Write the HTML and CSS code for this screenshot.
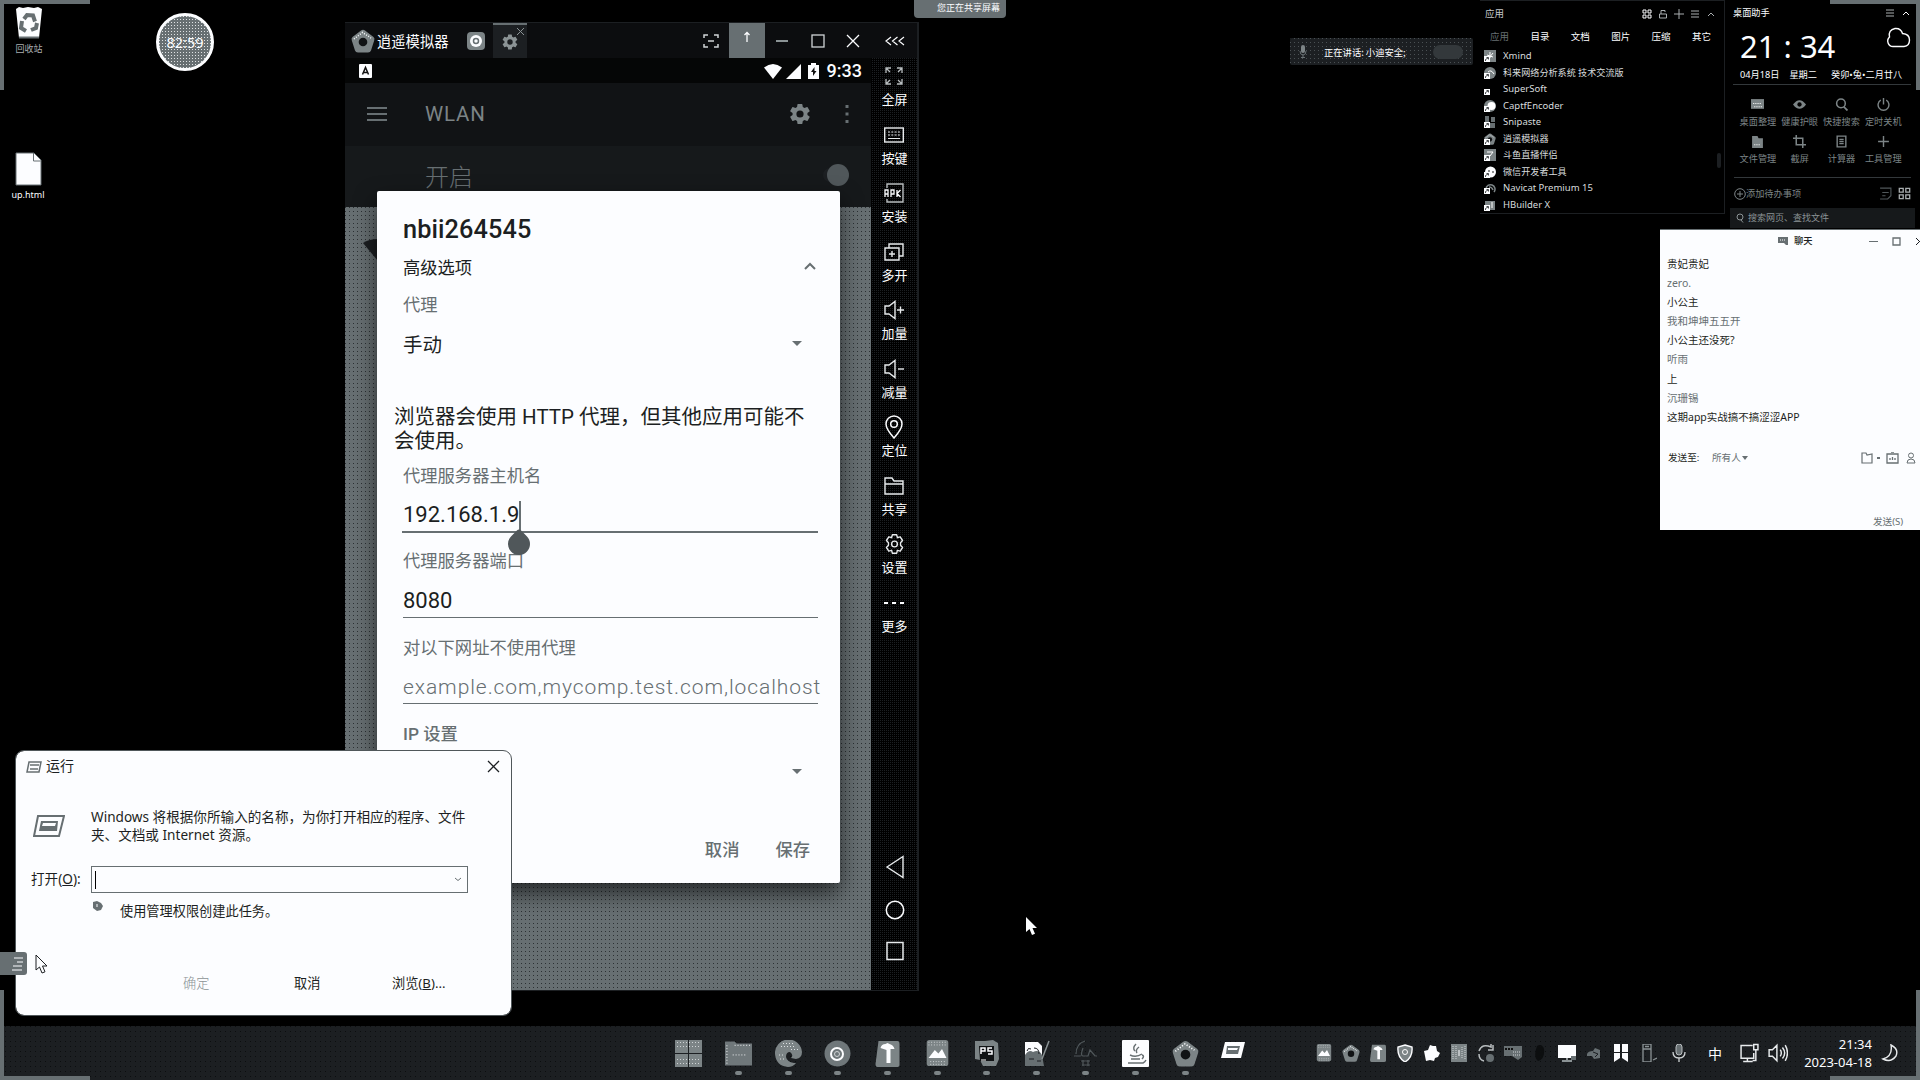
FILE: index.html
```html
<!DOCTYPE html>
<html lang="zh-CN">
<head>
<meta charset="utf-8">
<title>桌面</title>
<link rel="stylesheet" href="styles.css">
</head>
<body>
<svg class="defs" aria-hidden="true">
  <defs>
    <symbol id="penta" viewBox="0 0 24 24"><path d="M10 1.5Q12 .2 14 1.5L22.5 8Q24 9.400 23.200 11.500L20 21.500Q19.400 23.500 17 23.500H7Q4.600 23.500 4 21.500L.8 11.500Q0 9.400 1.500 8Z" fill="#7c8486"/><path d="M3 10L11.500 3.500 20 9" stroke="#fcfdff" stroke-width="1.500" stroke-dasharray="1 1.500" fill="none"/><circle cx="12" cy="13" r="4.300" fill="#111315"/></symbol>
    <symbol id="gear" viewBox="0 0 24 24"><path fill-rule="evenodd" d="M19.4 13c.04-.3.1-.6.1-1s-.03-.7-.1-1l2.1-1.600a.5.5 0 0 0 .1-.6l-2-3.500a.5.5 0 0 0-.6-.2l-2.500 1a7 7 0 0 0-1.700-1L14.400 2.400a.5.5 0 0 0-.5-.4h-4a.5.5 0 0 0-.5.4L9.100 5.100a7 7 0 0 0-1.700 1l-2.500-1a.5.5 0 0 0-.6.2l-2 3.500a.5.5 0 0 0 .1.6L4.600 11a8 8 0 0 0 0 2l-2.200 1.600a.5.5 0 0 0-.1.6l2 3.500c.1.2.4.3.6.2l2.500-1a7 7 0 0 0 1.700 1l.3 2.700c0 .2.200.4.500.4h4c.3 0 .5-.2.5-.4l.4-2.700a7 7 0 0 0 1.700-1l2.500 1c.2.1.5 0 .6-.2l2-3.500a.5.5 0 0 0-.1-.6zM12 15.600a3.600 3.600 0 1 1 0-7.200 3.600 3.600 0 0 1 0 7.200z"/></symbol>
    <symbol id="pic" viewBox="0 0 26 30"><rect x="1" width="24" height="29" rx="3" fill="#7c8486"/><path d="M3 2.500h20M3 5.500h20M5 24h18M5 27h18" stroke="#dfe2e4" stroke-dasharray="1 2"/><path d="M3 20l7-9 4 4 4-5 5 10z" fill="#fcfdff"/></symbol>
    <symbol id="typ" viewBox="0 0 24 27"><path d="M3 1h19q2 0 2 3v21q0 2-3 2H2q-2 0-2-3z" fill="#7c8486"/><path d="M5 8q1-4 5-4l2-1 2 1q4 1 5 5h-4v14h-4V10z" fill="#fcfdff"/></symbol>
    <symbol id="spk" viewBox="0 0 20 20"><path d="M1 6v8h4l6 4.500V1.500L5 6z" fill="none" stroke="#e8ebed" stroke-width="1.400"/></symbol>
    <symbol id="lnk" viewBox="0 0 6 6"><path d="M0 0h6v6H0z" fill="#fcfdff"/><path d="M1.500 5V3.500L4 2M2.500 1.500h2v2" stroke="#1c1f22" stroke-width=".8" fill="none"/></symbol>
    <symbol id="grid" viewBox="0 0 10 10"><path d="M1 1h3v3H1zM6 1h3v3H6zM1 6h3v3H1zM6 6h3v3H6z" fill="none" stroke="currentColor"/></symbol>
    <symbol id="menu" viewBox="0 0 10 10"><path d="M1 2h8M1 5h8M1 8h8" stroke="currentColor"/></symbol>
    <symbol id="up" viewBox="0 0 10 10"><path d="M2 7l3-3 3 3" fill="none" stroke="currentColor"/></symbol>
  </defs>
</svg>

<main class="desktop">
  <div class="corner tl"></div>

  <figure class="shortcut bin">
    <svg width="28" height="34" viewBox="0 0 28 34"><path d="M1 3l3-2 4 1 5-1 6 1 4-1 4 2-3 29H4z" fill="#fcfdff"/><path d="M4 30.500h20v2H4z" fill="#676f72"/><path d="M9 13l3-4 6 .5 2 6M7 15l-1 7 5 3M16 24l5-2 1-5" fill="none" stroke="#676f72" stroke-width="4"/><path d="M11 16l7 3-6 5z" fill="#fcfdff"/></svg>
    <figcaption>回收站</figcaption>
  </figure>
  <figure class="shortcut doc">
    <svg width="27" height="34" viewBox="0 0 27 34"><path d="M1 1h18l7 7v25H1z" fill="#fcfdff" stroke="#676f72"/><path d="M18.500 1v8h7" fill="none" stroke="#676f72"/></svg>
    <figcaption>up.html</figcaption>
  </figure>
  <div class="timer">82:59</div>
  <div class="share">您正在共享屏幕</div>

  <section class="emu">
    <header class="emu-bar">
      <svg class="logo" width="24" height="24"><use href="#penta"/></svg>
      <span class="emu-name">逍遥模拟器</span>
      <svg class="home" width="18" height="18" viewBox="0 0 18 18"><rect width="18" height="18" rx="4" fill="#7c8486"/><circle cx="9" cy="9" r="6" fill="#fcfdff"/><circle cx="9" cy="9" r="2.500" fill="none" stroke="#676f72" stroke-width="1.500"/></svg>
      <div class="tab"><svg width="18" height="18" fill="#8b9395"><use href="#gear"/></svg><svg class="tabx" width="7" height="7" viewBox="0 0 7 7"><path d="M0 0l7 7M7 0L0 7" stroke="#8b9395"/></svg></div>
      <div class="winbtns">
        <i><svg width="16" height="14" viewBox="0 0 16 14"><path d="M1 4V1h4M11 1h4v3M15 10v3h-4M5 13H1v-3M5 7h6" fill="none" stroke="#d0d4d6" stroke-width="1.500"/></svg></i>
        <i class="on"><svg width="8" height="12" viewBox="0 0 8 12"><path d="M4 2v9M1.500 4L4 1.500 6.500 4" fill="none" stroke="#fcfdff" stroke-width="1.300"/></svg></i>
        <i><svg width="14" height="14" viewBox="0 0 14 14"><path d="M1 7h12" stroke="#8b9395" stroke-width="2"/></svg></i>
        <i><svg width="14" height="14" viewBox="0 0 14 14"><rect x="1" y="1" width="12" height="12" fill="none" stroke="#d0d4d6" stroke-width="1.300"/></svg></i>
        <i><svg width="14" height="14" viewBox="0 0 14 14"><path d="M1 1l12 12M13 1L1 13" stroke="#fcfdff" stroke-width="1.300"/></svg></i>
        <i class="fold"><svg width="20" height="10" viewBox="0 0 20 10"><path d="M6 1L1 5l5 4M12.500 1l-5 4 5 4M19 1l-5 4 5 4" fill="none" stroke="#fcfdff" stroke-width="1.200"/></svg></i>
      </div>
    </header>
    <div class="emu-body">
      <div class="phone">
        <div class="status">
          <svg class="badge-a" width="13" height="14" viewBox="0 0 13 14"><rect width="13" height="14" rx="1" fill="#fcfdff"/><path d="M3.500 10.500l3-7 3 7M4.500 8.500h4" fill="none" stroke="#111" stroke-width="1.500"/></svg>
          <svg width="20" height="16" viewBox="0 0 20 16"><path d="M1 4.500Q10-2.500 19 4.500L10 16z" fill="#fcfdff"/></svg>
          <svg width="17" height="16" viewBox="0 0 17 16"><path d="M1 16L16 1v15z" fill="#fcfdff"/></svg>
          <svg class="batt" width="11" height="16" viewBox="0 0 11 16"><path d="M3 2V0h5v2h3v14H0V2z" fill="#fcfdff"/><path d="M6.500 4L3 9h2v4l3.500-5h-2z" fill="#111"/></svg>
          <b>9:33</b>
        </div>
        <div class="appbar">
          <svg width="20" height="16" viewBox="0 0 20 16"><path d="M0 2h20M0 8h20M0 14h20" stroke="#676f72" stroke-width="2"/></svg>
          <span>WLAN</span>
          <svg class="push" width="24" height="24" fill="#7c8486"><use href="#gear"/></svg>
          <svg class="dots" width="4" height="20" viewBox="0 0 4 20"><path d="M.5 1h3v3h-3zM.5 8.500h3v3h-3zM.5 16h3v3h-3z" fill="#676f72"/></svg>
        </div>
        <div class="toggle-row"><span>开启</span><i class="knob"></i></div>
        <div class="backdrop"><svg width="16" height="22" viewBox="0 0 16 22"><path d="M1 4Q7 0 16 0v22z" fill="#1c1f22"/></svg></div>
        <form class="dialog">
          <h1>nbii264545</h1>
          <div class="row adv"><span>高级选项</span><svg width="12" height="8" viewBox="0 0 12 8"><path d="M1 7l5-5 5 5" fill="none" stroke="#676f72" stroke-width="2"/></svg></div>
          <label class="lb l1">代理</label>
          <div class="row sel"><span>手动</span><em class="caret"></em></div>
          <p>浏览器会使用 HTTP 代理，但其他应用可能不<br>会使用。</p>
          <label class="lb l2">代理服务器主机名</label>
          <div class="field host">192.168.1.9<em class="drop"></em></div>
          <label class="lb l3">代理服务器端口</label>
          <div class="field port">8080</div>
          <label class="lb l4">对以下网址不使用代理</label>
          <div class="field hint">example.com,mycomp.test.com,localhost</div>
          <label class="lb l5">IP 设置</label>
          <div class="row ip"><span></span><em class="caret"></em></div>
          <div class="acts"><span>取消</span><span>保存</span></div>
        </form>
      </div>
      <nav class="side">
        <div><svg width="20" height="20" viewBox="0 0 20 20"><path d="M2 7V2h5M2 2l4 4M13 2h5v5M18 2l-4 4M18 13v5h-5M18 18l-4-4M7 18H2v-5M2 18l4-4" fill="none" stroke="#b8bdbf" stroke-width="1.300"/></svg>全屏</div>
        <div><svg width="20" height="20" viewBox="0 0 20 20"><rect x=".7" y="3" width="18.600" height="14" fill="none" stroke="#e8ebed" stroke-width="1.400"/><path d="M4 7h12M4 10h12" stroke="#e8ebed" stroke-dasharray="2 1.300"/><path d="M4 13.500h12" stroke="#e8ebed"/></svg>按键</div>
        <div><svg width="20" height="20" viewBox="0 0 20 20"><path d="M3 5V1h16v18H3v-3" fill="none" stroke="#b8bdbf" stroke-width="1.400"/><path d="M1 14V7h3v7M1 11h3M7 14V7h3v4H7M13 7v7M16.500 7L13 10.500l3.500 3.500" fill="none" stroke="#fcfdff" stroke-width="1.300"/></svg>安装</div>
        <div><svg width="20" height="20" viewBox="0 0 20 20"><path d="M5 6V2h14v12h-4M1 6h14v12H1zM8 9v6M5 12h6" fill="none" stroke="#e8ebed" stroke-width="1.400"/></svg>多开</div>
        <div><svg width="20" height="20" viewBox="0 0 20 20"><use href="#spk"/><path d="M13 10h7M16.500 6.500v7" stroke="#e8ebed" stroke-width="1.400"/></svg>加量</div>
        <div><svg width="20" height="20" viewBox="0 0 20 20"><use href="#spk"/><path d="M14 10h6" stroke="#e8ebed" stroke-width="1.400"/></svg>减量</div>
        <div><svg width="20" height="24" viewBox="0 0 20 24"><path d="M10 23Q2 14 2 9a8 8 0 0 1 16 0q0 5-8 14z" fill="none" stroke="#fcfdff" stroke-width="1.500"/><circle cx="10" cy="9" r="3.300" fill="none" stroke="#fcfdff" stroke-width="1.500"/></svg>定位</div>
        <div><svg width="20" height="20" viewBox="0 0 20 20"><path d="M1 18V2h7l2 3h9v13zM1 8h18" fill="none" stroke="#e8ebed" stroke-width="1.400"/></svg>共享</div>
        <div><svg width="21" height="21" viewBox="0 0 24 24"><path d="M9.500 1.500h5l.8 3.300 3.200-1 2.700 4.200-2.300 2.500v3l2.300 2.500-2.700 4.200-3.200-1-.8 3.300h-5l-.8-3.300-3.200 1L2.800 16l2.300-2.500v-3L2.800 8l2.700-4.200 3.200 1z" fill="none" stroke="#e8ebed" stroke-width="1.600" stroke-linejoin="round"/><circle cx="12" cy="12" r="3.300" fill="none" stroke="#e8ebed" stroke-width="1.600"/></svg>设置</div>
        <div><svg width="20" height="20" viewBox="0 0 20 20"><path d="M0 10h4M8 10h4M16 10h4" stroke="#fcfdff" stroke-width="2"/></svg>更多</div>
        <svg class="nav first" width="20" height="24" viewBox="0 0 20 24"><path d="M2 12L18 1.500v21z" fill="none" stroke="#e8ebed" stroke-width="1.400"/></svg>
        <svg class="nav" width="20" height="20" viewBox="0 0 20 20"><circle cx="10" cy="10" r="8.700" fill="none" stroke="#fcfdff" stroke-width="1.500"/></svg>
        <svg class="nav" width="20" height="20" viewBox="0 0 20 20"><rect x="2" y="1.500" width="16" height="17" fill="none" stroke="#e8ebed" stroke-width="1.500"/></svg>
      </nav>
    </div>
  </section>

  <section class="run">
    <header><svg width="16" height="12" viewBox="0 0 16 12"><path d="M3 1h12l-2 10H1zM4 4h9M4 8h8" fill="none" stroke="#676f72" stroke-width="1.500"/></svg><span>运行</span><svg class="push" width="13" height="13" viewBox="0 0 13 13"><path d="M1 1l11 11M12 1L1 12" stroke="#1c1f22" stroke-width="1.300"/></svg></header>
    <div class="intro"><svg width="32" height="23" viewBox="0 0 32 23"><path d="M5 1h26l-5 20H1z" fill="none" stroke="#676f72" stroke-width="2"/><path d="M8 6h17l-1 10H6z" fill="#676f72"/><path d="M10 8h13l-1 3H9z" fill="#fcfdff"/></svg><p>Windows 将根据你所输入的名称，为你打开相应的程序、文件<br>夹、文档或 Internet 资源。</p></div>
    <div class="open"><label>打开(<u>O</u>):</label><div class="combo"><i></i><svg width="8" height="5" viewBox="0 0 8 5"><path d="M1 1l3 2.500L7 1" fill="none" stroke="#676f72"/></svg></div></div>
    <div class="admin"><svg width="11" height="10" viewBox="0 0 11 10"><path d="M1 1l4-1 4 2 2 3-2 4-4 1-4-3z" fill="#676f72"/><path d="M5 3v3" stroke="#fcfdff"/></svg><span>使用管理权限创建此任务。</span></div>
    <footer><span class="off">确定</span><span>取消</span><span>浏览(<u>B</u>)...</span></footer>
  </section>
  <div class="dock"><svg width="16" height="14" viewBox="0 0 16 14"><path d="M5 1h9M8 5h6M4 9h9M3 13h10" stroke="#fcfdff"/></svg></div>
  <svg class="ptr p1" width="14" height="20" viewBox="0 0 14 20"><path d="M1 1v15l3.500-3 2.500 6 3-1.200L7.500 12H12z" fill="#fcfdff" stroke="#1c1f22"/></svg>
  <svg class="ptr p2" width="14" height="20" viewBox="0 0 14 20"><path d="M1 1v15l3.500-3 2.500 6 3-1.200L7.500 12H12z" fill="#fcfdff"/></svg>

  <div class="talk"><svg width="8" height="13" viewBox="0 0 8 13"><rect x="2" width="4" height="8" rx="2" fill="#7c8486"/><path d="M1 6q0 4 3 4t3-4M4 10v2M2 12.500h4" fill="none" stroke="#676f72"/></svg><span>正在讲话: 小迪安全;</span><i></i></div>

  <section class="apps">
    <header>应用<span class="tools"><svg class="w"><use href="#grid"/></svg><svg viewBox="0 0 10 10"><path d="M1.500 5h7v4h-7zM3 5V1.500h4V3" fill="none" stroke="currentColor"/></svg><svg viewBox="0 0 10 10"><path d="M0 5h10M5 0v10" stroke="currentColor"/></svg><svg><use href="#menu"/></svg><svg><use href="#up"/></svg></span></header>
    <nav><span class="dim">应用</span><span>目录</span><span>文档</span><span>图片</span><span>压缩</span><span>其它</span></nav>
    <ul>
      <li><svg viewBox="0 0 12 12"><rect width="12" height="12" fill="#7c8486"/><path d="M6 2v6M3 5l6 2M9 3L5 8" stroke="#fff"/><use href="#lnk" y="6" width="6" height="6"/></svg>Xmind</li>
      <li><svg viewBox="0 0 12 12"><circle cx="6" cy="6" r="6" fill="#7c8486"/><path d="M4 5q3-3 6 2" stroke="#fff" fill="none"/><use href="#lnk" y="6" width="6" height="6"/></svg><span class="cj">科来网络分析系统 技术交流版</span></li>
      <li><svg viewBox="0 0 12 12"><use href="#lnk" y="6" width="6" height="6"/></svg>SuperSoft</li>
      <li><svg viewBox="0 0 12 12"><circle cx="6" cy="6" r="6" fill="#7c8486"/><circle cx="7.500" cy="6" r="4" fill="#fff"/><use href="#lnk" y="6" width="6" height="6"/></svg>CaptfEncoder</li>
      <li><svg viewBox="0 0 12 12"><path d="M1 0h4v6H1zM7 1h4v5H7zM5 7h6v5H5z" fill="#676f72"/><use href="#lnk" y="6" width="6" height="6"/></svg>Snipaste</li>
      <li><svg viewBox="0 0 12 12"><use href="#penta"/><use href="#lnk" y="6" width="6" height="6"/></svg><span class="cj">逍遥模拟器</span></li>
      <li><svg viewBox="0 0 12 12"><rect width="12" height="12" fill="#7c8486"/><path d="M3 3h6L6 7" stroke="#fff" fill="none"/><use href="#lnk" y="6" width="6" height="6"/></svg><span class="cj">斗鱼直播伴侣</span></li>
      <li><svg viewBox="0 0 12 12"><circle cx="6.500" cy="6" r="5.500" fill="#fcfdff"/><circle cx="5" cy="5" r=".8"/><circle cx="9" cy="6" r=".8"/><use href="#lnk" y="6" width="6" height="6"/></svg><span class="cj">微信开发者工具</span></li>
      <li><svg viewBox="0 0 12 12"><path d="M2 7a4.500 4.500 0 1 1 8 3M5 5q3 0 4 3" fill="none" stroke="#7c8486" stroke-width="1.500"/><use href="#lnk" y="6" width="6" height="6"/></svg>Navicat Premium 15</li>
      <li><svg viewBox="0 0 12 12"><path d="M1 2h10v9H6V6H1z" fill="#7c8486"/><path d="M8 3v6" stroke="#fff"/><use href="#lnk" y="6" width="6" height="6"/></svg>HBuilder X</li>
    </ul>
    <i class="thumb"></i>
  </section>

  <section class="helper">
    <header>桌面助手<span class="tools"><svg><use href="#menu"/></svg><svg class="w"><use href="#up"/></svg></span></header>
    <div class="big"><time>21 : 34</time><svg width="25" height="21" viewBox="0 0 25 21"><path d="M7 19.500a5.500 5.500 0 0 1-3.500-9.500Q2 3 9 1.500q6-.5 7.500 5Q23.500 7 23.500 13T18 19.500z" fill="none" stroke="#fcfdff" stroke-width="1.400"/></svg></div>
    <div class="dates"><span>04月18日</span><span>星期二</span><span>癸卯•兔•二月廿八</span></div>
    <div class="tiles">
      <div><svg viewBox="0 0 12 12"><path d="M0 1h12v9H0z" fill="#7c8486"/><path d="M2 5h8M3 8h7" stroke="#fff" stroke-dasharray="1 1"/></svg>桌面整理</div>
      <div><svg viewBox="0 0 12 12"><path d="M0 6q6-8 12 0-6 8-12 0z" fill="#7c8486"/><circle cx="6" cy="6" r="2" fill="#000"/></svg>健康护眼</div>
      <div><svg viewBox="0 0 12 12"><circle cx="5.500" cy="5" r="4" fill="none" stroke="#7c8486" stroke-width="1.400"/><path d="M8 8l3.500 3.500" stroke="#7c8486" stroke-width="1.600"/></svg>快捷搜索</div>
      <div><svg viewBox="0 0 12 12"><path d="M3.500 2a5 5 0 1 0 5 0M6 0v6" fill="none" stroke="#7c8486" stroke-width="1.300"/></svg>定时关机</div>
      <div><svg viewBox="0 0 12 12"><path d="M1 1h5l1 2h4v9H1z" fill="#7c8486"/><path d="M3 9h6" stroke="#fff" stroke-dasharray="1 1"/></svg>文件管理</div>
      <div><svg viewBox="0 0 12 12"><path d="M3 0v9h9M0 3h9v9" fill="none" stroke="#7c8486" stroke-width="1.400"/></svg>截屏</div>
      <div><svg viewBox="0 0 12 12"><path d="M2 1h8v10H2zM4 4h4M4 6h4M4 8h4" fill="none" stroke="#7c8486" stroke-width="1.300"/></svg>计算器</div>
      <div><svg viewBox="0 0 12 12"><path d="M1 6h10M6 1v10" stroke="#7c8486" stroke-width="1.300"/></svg>工具管理</div>
    </div>
    <div class="todo"><svg viewBox="0 0 12 12"><circle cx="6" cy="6" r="5.300" fill="none" stroke="currentColor"/><path d="M3 6h6M6 3v6" stroke="currentColor"/></svg>添加待办事项<span class="tools big-tools"><svg viewBox="0 0 12 12"><path d="M1 1h10v7l-3 3H1M3 5h6M3 8h3" fill="none" stroke="#50575a"/></svg><svg><use href="#grid"/></svg></span></div>
    <div class="search"><svg viewBox="0 0 10 10"><circle cx="5" cy="4" r="3" fill="none" stroke="currentColor"/><path d="M6 7l2 2.500" stroke="currentColor"/></svg>搜索网页、查找文件</div>
  </section>

  <section class="chat">
    <header><svg width="10" height="9" viewBox="0 0 10 9"><path d="M0 0h10v8H8L6 6H0z" fill="#676f72"/><path d="M2 3h6" stroke="#fff" stroke-dasharray="1 1"/></svg><b>聊天</b><span class="ctl"><svg width="9" height="9" viewBox="0 0 9 9"><path d="M0 4.500h9" stroke="#676f72"/></svg><svg width="9" height="9" viewBox="0 0 9 9"><path d="M1 1h7v7H1z" fill="none" stroke="#676f72" stroke-width="1.300"/></svg><svg width="9" height="9" viewBox="0 0 9 9"><path d="M1 1l7 7M8 1L1 8" stroke="#1c1f22"/></svg></span></header>
    <ol>
      <li class="k">贵妃贵妃</li><li>zero.</li><li class="k">小公主</li><li>我和坤坤五五开</li><li class="k">小公主还没死?</li><li>听雨</li><li class="k">上</li><li>沉珊锡</li><li class="k">这期app实战搞不搞涩涩APP</li>
    </ol>
    <div class="to"><span>发送至:</span><span class="all">所有人</span><em></em>
      <svg class="push" width="13" height="12" viewBox="0 0 13 12"><path d="M1 1h4l1 2 5-1v9H1z" fill="none" stroke="#676f72" stroke-width="1.200"/></svg><small></small>
      <svg class="g1" width="13" height="12" viewBox="0 0 13 12"><path d="M1 2h11v9H1zM4 6v2M6.500 5v3M9 6v2M5 0h3" fill="none" stroke="#676f72" stroke-width="1.300"/></svg>
      <svg class="g2" width="10" height="12" viewBox="0 0 10 12"><circle cx="5" cy="3.500" r="2.500" fill="none" stroke="#676f72"/><path d="M1 11q0-4 4-4t4 4z" fill="none" stroke="#676f72"/></svg>
    </div>
    <footer>发送(S)</footer>
  </section>

  <footer class="taskbar">
    <div class="pins">
      <i><svg viewBox="0 0 27 27"><path d="M0 0h13v13H0zM14 0h13v13H14zM0 14h13v13H0zM14 14h13v13H14z" fill="#7c8486"/><path d="M2 2.500h24M2 6.500h24M2 19.500h24M2 23.500h24" stroke="#d0d4d6" stroke-dasharray="1 2"/></svg></i>
      <i class="r"><svg viewBox="0 0 28 27"><path d="M0 1h10l2 2h16v23H0z" fill="#6f777a"/><path d="M2 5v20M10 5h17M8 15h15" stroke="#fcfdff" stroke-dasharray="1 2"/></svg></i>
      <i class="r"><svg viewBox="0 0 27 27"><path d="M0 14A13.500 13.500 0 0 1 27 12q0 6-6 7l-5-1q3-3-1-6-4 0-4 5 1 5 8 6l2 0q-3 4-8 4Q1 26 0 14z" fill="#7c8486"/><path d="M8 3.500h10M6 6.500h14M16 9.500h8M4 15h5M5 19h5" stroke="#dfe2e4" stroke-dasharray="1 2"/></svg></i>
      <i class="r"><svg viewBox="0 0 27 27"><circle cx="13.500" cy="13.500" r="13" fill="#6f777a"/><circle cx="13" cy="14" r="6" fill="none" stroke="#fcfdff" stroke-width="2"/><circle cx="13" cy="14" r="2.500" fill="none" stroke="#d0d4d6"/></svg></i>
      <i class="r"><svg class="sm"><use href="#typ"/></svg></i>
      <i class="r"><svg class="sm"><use href="#pic"/></svg></i>
      <i class="r"><svg viewBox="0 0 27 27"><path d="M2 1l10 0 8-1 5 3 1 16-3 7H10L7 20 2 19z" fill="#7c8486"/><path d="M6 6h15v15H7z" fill="#111315"/><path d="M8 14V8h4v3H8M19 8h-4v3h4v3h-4" fill="none" stroke="#fcfdff" stroke-width="1.500"/><path d="M8 20h5" stroke="#fff"/></svg></i>
      <i class="r"><svg viewBox="0 0 27 27"><path d="M2 2h13l4 4v12H2z" fill="#fcfdff"/><path d="M2 15q4-6 8-3 6-3 9 3l2 11H2z" fill="#676f72"/><path d="M4 11q1-4 4-2M11 8q5 0 5 6M6 19h5M14 21h4" stroke="#1c1f22" fill="none"/><path d="M26 1l-7 18" stroke="#8b9395" stroke-width="1.500"/></svg></i>
      <i class="r"><svg viewBox="0 0 27 27"><path d="M13 1Q4 4 4 14M2 16h7M11 8q-3 8 0 8h5l2-6 5 6h2M9 21h9M10 25h8M11 20v6M16 20v6" fill="none" stroke="#50575a" stroke-width="1.200"/></svg></i>
      <i class="r"><svg viewBox="0 0 27 27"><rect width="27" height="27" rx="1" fill="#fcfdff"/><path d="M14 4q-4 4-1 7M17 7q-4 3-2 6M8 15q6 3 12-1M9 19h9M6 23h15q2-1 3-3M20 15q3 1 0 4" fill="none" stroke="#676f72" stroke-width="1.400"/></svg></i>
      <i class="r"><svg><use href="#penta"/></svg></i>
      <i class="last"><svg viewBox="0 0 24 18"><path d="M4 1h20l-4 16H0z" fill="#fcfdff"/><path d="M6 5h13l-2 8H5z" fill="#676f72"/><path d="M7 7h10l-1 2H7z" fill="#fcfdff"/></svg></i>
    </div>
    <div class="tray">
      <svg><use href="#pic"/></svg>
      <svg><use href="#penta"/></svg>
      <svg><use href="#typ"/></svg>
      <svg viewBox="0 0 18 18"><path d="M9 1l7 2q1 10-7 15Q1 13 2 3z" fill="#7c8486" stroke="#fcfdff" stroke-width="1.400"/><circle cx="9" cy="8" r="2.500" fill="none" stroke="#fff"/></svg>
      <svg viewBox="0 0 18 18"><path d="M7 1l3 1 3 0 1 5 3 2-2 4-3 1-1 3-4-1-4 1-1-5-1-5 4-1z" fill="#fcfdff"/></svg>
      <svg viewBox="0 0 18 18"><rect x="1" width="16" height="18" fill="#7c8486"/><path d="M3 2v14M6 2v14M12 3v12M15 2v14" stroke="#d0d4d6" stroke-dasharray="1 1"/><path d="M9 6v6" stroke="#fcfdff"/></svg>
      <svg viewBox="0 0 18 18"><path d="M2 7q3-8 12-4V0M16 1v5h-5M2 10q0 6 5 7" fill="none" stroke="#b8bdbf" stroke-width="1.500"/><circle cx="13" cy="14" r="4" fill="#676f72"/></svg>
      <svg viewBox="0 0 18 18"><path d="M0 2h18v11l-4 3-6-4H0z" fill="#676f72"/><path d="M1 5h8" stroke="#111" stroke-width="2" stroke-dasharray="2 1"/><path d="M9 8h8M9 11h8" stroke="#d0d4d6" stroke-dasharray="1 1"/></svg>
      <svg viewBox="0 0 18 18"><path d="M6 2q5-3 7 3 1 10-6 12-5-4-1-15z" fill="#0c0e0f"/></svg>
      <svg viewBox="0 0 18 18"><path d="M0 1h18v13H0z" fill="#fcfdff"/><path d="M4 17h10M9 14v3" stroke="#8b9395" stroke-width="2"/><path d="M13 12h6v4h-6z" fill="#676f72"/></svg>
      <svg viewBox="0 0 18 18"><path d="M2 10q1-3 6-3l2-3 5 2v8l-6 1-2-3H2z" fill="#676f72"/><path d="M8 8l5 2-3 3" stroke="#1c1f22" fill="none"/></svg>
      <svg viewBox="0 0 18 18"><path d="M2 0h6v8H2zM10 0h6v8h-6zM2 9h6v5l-6 4zM10 9h6v9l-6-4z" fill="#fcfdff"/></svg>
      <svg viewBox="0 0 18 18"><path d="M4 5h8v13H4zM4 5V0h8v5M6 2.500h4M14 16l4-2" fill="none" stroke="#8b9395" stroke-width="1.300"/></svg>
      <svg class="mic" viewBox="0 0 18 18"><rect x="6" y="0" width="6" height="11" rx="3" fill="#676f72" stroke="#b8bdbf"/><path d="M3 8q0 6 6 6t6-6M9 14v4" fill="none" stroke="#d0d4d6" stroke-width="1.300"/></svg>
      <span class="ime">中</span>
      <svg class="net" viewBox="0 0 18 18"><path d="M12 2H1v12h12V9M3 17h9M7 14v3M13 1h4v5h-4zM15 6v10h-3" fill="none" stroke="#e8ebed" stroke-width="1.400"/></svg>
      <svg class="vol" viewBox="0 0 18 18"><path d="M1 6v6h3l4 4V2L4 6zM11 6q2 3 0 6M13 4q4 5 0 10M15.500 2q4 7 0 14" fill="none" stroke="#e8ebed" stroke-width="1.300"/></svg>
      <div class="clock">21:34<br>2023-04-18</div>
      <svg class="moon" viewBox="0 0 18 18"><path d="M10 1q8 4 5 11-5 7-13 3 10-3 8-14z" fill="none" stroke="#e8ebed" stroke-width="1.400"/></svg>
    </div>
  </footer>
  <div class="corner tr"></div>
  <div class="corner bl"></div>
  <div class="corner br"></div>
</main>
</body>
</html>
```
FILE: styles.css
```css
:root {
  --ink: #1c1f22;
  --grey: #676f72;
  --white: #fcfdff;
  --ui: "Noto Sans", "Noto Sans CJK SC", sans-serif;
  --cjk: "Noto Sans CJK SC", sans-serif;
  --droid: Roboto, "Noto Sans CJK SC", sans-serif;
}
* { box-sizing: border-box; margin: 0; padding: 0; }
body { background: #000; font-family: var(--ui); color: var(--white); }
i, em { font-style: normal; }
ul, ol { list-style: none; }
svg { display: block; flex: none; }
.defs { position: absolute; width: 0; height: 0; }
.push { margin-left: auto; }
.desktop { position: relative; width: 1920px; height: 1080px; overflow: hidden; background: #000; }

/* screen-share corner brackets */
.corner { position: absolute; width: 90px; height: 90px; border: 0 solid var(--grey); pointer-events: none; }
.tl { left: 0; top: 0; border-width: 4px 0 0 4px; }
.tr { right: 0; top: 0; border-width: 4px 4px 0 0; }
.bl { left: 0; bottom: 0; border-width: 0 0 4px 4px; }
.br { right: 0; bottom: 0; border-width: 0 4px 4px 0; }

.shortcut { position: absolute; width: 58px; display: flex; flex-direction: column; align-items: center; font-size: 9px; line-height: 12px; }
.bin { left: 0; top: 6px; }
.bin figcaption { margin-top: 3px; font-family: var(--cjk); color: #a9aeb0; }
.doc { left: -1px; top: 152px; }
.doc figcaption { margin-top: 3px; }
.timer {
  position: absolute; left: 156px; top: 13px; width: 58px; height: 58px; border: 3px solid var(--white); border-radius: 50%;
  background: conic-gradient(at 1px 1px, transparent 270deg, #dfe2e4 0) 0 0 / 3px 3px var(--grey);
  display: flex; align-items: center; justify-content: center; font-size: 14.500px;
}
.share {
  position: absolute; left: 914px; top: 0; width: 92px; height: 18px; border-radius: 0 0 4px 4px; background: var(--grey);
  padding: 1px 6px 0 23px; font: 9px/13px var(--cjk); white-space: nowrap;
}

/* emulator window */
.emu { position: absolute; left: 345px; top: 22px; width: 574px; height: 969px; background: #08090a; border: 1px solid #1c1f22; border-left: 0; border-right-width: 2px; }
.emu-bar {
  height: 35px; display: flex; align-items: center; padding-left: 6px;
  background: #0c0d0f;
}
.emu-name { margin-left: 2px; width: 72px; font: 14.300px/20px var(--cjk); white-space: nowrap; }
.home { margin-left: 18px; }
.tab { position: relative; margin-left: 8px; width: 34px; height: 35px; background: var(--ink); border-top: 2px solid var(--grey); display: flex; align-items: center; justify-content: center; }
.tabx { position: absolute; right: 3px; top: 3px; }
.winbtns { margin-left: auto; display: flex; align-items: center; height: 35px; margin-right: -1px; }
.winbtns i { width: 35.500px; height: 35px; display: flex; align-items: center; justify-content: center; }
.winbtns .on { background: var(--grey); }
.winbtns .on svg { margin-bottom: 8px; }
.winbtns .fold { width: 47px; }
.emu-body { display: grid; grid-template-columns: 526px 1fr; height: 932px; }
.phone { position: relative; display: flex; flex-direction: column; font-family: var(--droid); }
.status { height: 25px; padding: 0 9px 0 14px; display: flex; align-items: center; background: #050606; }
.badge-a { margin-right: auto; }
.status svg + svg { margin-left: 2px; }
.status .batt { margin-left: 6px; }
.status b { margin-left: 8px; font-size: 18px; font-weight: 500; line-height: 24px; }
.appbar { height: 63px; padding: 0 22px 1px 22px; display: flex; align-items: center; color: #7c8486; background: #111315; font-size: 20.500px; }
.appbar span { margin-left: 38px; letter-spacing: .8px; }
.appbar .dots { margin-left: 33px; }
.toggle-row { height: 61px; padding: 0 22px 3px 80px; display: flex; align-items: center; justify-content: space-between; background: #16191b; color: var(--grey); font-size: 24px; font-weight: 300; }
.knob { width: 22px; height: 22px; border-radius: 50%; background: #50575a; box-shadow: -8px 0 0 -4px #1c1f22; }
.backdrop {
  flex: 1; padding: 32px 0 0 17px;
  background: conic-gradient(at 1px 1px, transparent 270deg, #2c3134 0) 0 0 / 4px 4px var(--grey);
}

.dialog {
  position: absolute; left: 32px; top: 133px; width: 463px; height: 692px; padding: 15px 22px 0 26px; border-radius: 2px;
  background: var(--white); color: var(--ink); display: flex; flex-direction: column;
  box-shadow: 0 10px 22px rgba(0, 0, 0, .65);
}
.dialog > * { flex: none; }
.dialog h1 { height: 46px; line-height: 48px; font-size: 25.300px; font-weight: 500; letter-spacing: .1px; }
.row { display: flex; align-items: center; justify-content: space-between; }
.adv { height: 28px; font-size: 17.300px; padding-right: 2px; }
.lb { color: var(--grey); font-size: 17.300px; display: block; white-space: nowrap; }
.l1 { height: 50px; line-height: 51px; }
.sel { height: 26px; font-size: 19.500px; padding-right: 16px; }
.caret { border: 5px solid transparent; border-top-color: var(--grey); border-bottom: 0; }
.dialog p { margin: 49px 0 0 -9px; font-size: 20.500px; line-height: 24px; white-space: nowrap; }
.l2 { height: 46px; line-height: 46px; }
.field { font-size: 22px; border-bottom: 1px solid var(--grey); white-space: nowrap; }
.host { position: relative; height: 34px; line-height: 31px; margin-left: -1px; padding-left: 1px; border-bottom-width: 2px; }
.host::after { content: ""; display: inline-block; width: 2px; height: 30px; background: var(--grey); vertical-align: middle; }
.drop { position: absolute; left: 106px; top: 34px; width: 22px; height: 22px; border-radius: 3px 50% 50% 50%; transform: rotate(45deg); background: #50575a; }
.l3 { height: 57px; line-height: 57px; }
.port { height: 28px; line-height: 22px; }
.l4 { height: 60px; line-height: 60px; }
.hint { height: 26px; line-height: 18px; color: var(--grey); font-weight: 300; font-size: 21px; letter-spacing: .92px; }
.l5 { height: 60px; line-height: 60px; font-weight: 500; }
.ip { height: 14px; padding-right: 16px; }
.acts { margin-top: 50px; height: 40px; padding-right: 8px; display: flex; align-items: center; justify-content: flex-end; gap: 36px; color: var(--grey); font-size: 17.300px; font-weight: 500; }

.side {
  border-left: 1px solid #000; display: flex; flex-direction: column; align-items: center; font: 13px/18px var(--cjk);
  background: conic-gradient(at 1px 1px, transparent 270deg, #1c1f22 0) 0 0 / 2px 2px #000;
}
.side div { height: 58.500px; padding-top: 3px; display: flex; flex-direction: column; align-items: center; justify-content: flex-start; }
.side div svg { height: 24px; margin: 3px 0 2px; }
.nav { margin-top: 21px; }
.first { margin-top: 212px; }

/* Run dialog */
.run { position: absolute; left: 16px; top: 751px; width: 495px; height: 264px; border-radius: 8px; background: var(--white); color: var(--ink); font: 13.200px/18.500px var(--ui); white-space: nowrap; outline: 1px solid #50575a; }
.run header { height: 31px; padding: 0 11px 0 10px; display: flex; align-items: center; gap: 4px; font-size: 14px; }
.intro { height: 73px; display: flex; padding: 26px 0 0 17px; }
.intro svg { margin-top: 7px; }
.intro p { margin-left: 26px; font-size: 13.600px; line-height: 18px; }
.open { display: flex; align-items: center; padding-left: 15px; margin-top: 11px; height: 27px; font-size: 13.600px; }
.open label { width: 60px; }
.combo { width: 377px; height: 27px; border: 1px solid var(--grey); display: flex; align-items: center; justify-content: space-between; padding: 0 5px 0 3px; }
.combo i { width: 1px; height: 18px; background: #000; }
.admin { display: flex; padding: 6px 0 0 76px; margin-top: 2px; }
.admin svg { margin-top: 0; }
.admin span { margin: 1px 0 0 17px; }
.run footer { display: flex; padding: 53px 0 0 167px; }
.run footer span { width: 105px; }
.run footer span:nth-child(3) { margin-left: -2px; }
.run footer span:nth-child(2) { margin-left: 6px; width: 100px; }
.run footer .off { color: #8b9395; font-weight: 300; }
.dock { position: absolute; left: 0; top: 952px; width: 27px; height: 23px; border-radius: 0 3px 3px 0; background: var(--grey); display: flex; align-items: center; padding-left: 9px; }
.ptr { position: absolute; }
.p1 { left: 35px; top: 954px; }
.p2 { left: 1025px; top: 916px; }

.talk {
  position: absolute; left: 1290px; top: 38px; width: 183px; height: 27px; border-radius: 2px; display: flex; align-items: center; padding: 0 10px 0 9px; font: 9.300px/14px var(--cjk);
  background: conic-gradient(at 1px 1px, transparent 270deg, #4a5053 0) 0 0 / 4px 4px var(--ink);
}
.talk span { margin-left: 17px; white-space: nowrap; }
.talk i { margin-left: auto; width: 30px; height: 14px; border-radius: 7px; background: #33383b; }

/* desktop panels */
.tools { margin-left: auto; display: flex; gap: 6px; color: #a9aeb0; }
.tools svg { width: 10px; height: 10px; }
.tools .w { color: var(--white); }
.apps { position: absolute; left: 1480px; top: 0; width: 245px; height: 214px; border: 1px solid #1c1f22; border-left: 0; font: 9.500px/14px var(--ui); }
.apps header { height: 25px; padding: 0 8px 0 5px; display: flex; align-items: center; color: #c4c8ca; }
.apps nav { height: 22px; padding-left: 10px; display: flex; align-items: center; }
.apps nav span { flex: none; width: 40.400px; }
.apps nav span:last-child { width: 20px; }
.apps nav .dim { color: var(--grey); }
.apps li { height: 16.500px; padding-left: 4px; display: flex; align-items: center; gap: 7px; color: #d8dcde; white-space: nowrap; font-size: 9.500px; }
.apps li svg { width: 12px; height: 12px; }
.apps .cj { font-size: 9.100px; }
.thumb { position: absolute; right: 3px; top: 152px; width: 4px; height: 15px; border-radius: 2px; background: var(--ink); }
.helper { position: absolute; left: 1726px; top: 0; width: 192px; height: 229px; font: 9.200px/12px var(--ui); white-space: nowrap; }
.helper header { height: 26px; padding: 0 7px; display: flex; align-items: center; }
.big { display: flex; align-items: center; height: 38px; padding: 2px 7px 0 14px; font-size: 31px; line-height: 38px; }
.big svg { margin: -18px 0 0 auto; }
.dates { display: flex; height: 21px; margin: 0 7px; padding: 1px 0 0 7px; align-items: center; gap: 10px; border-bottom: 1px solid #33383b; }
.dates span:last-child { margin-left: 4px; }
.tiles { display: grid; grid-template-columns: repeat(4, 41.800px); grid-auto-rows: 37px; padding: 13px 0 0 11px; height: 92px; color: #7c8486; }
.tiles div { display: flex; flex-direction: column; align-items: center; gap: 5px; }
.tiles svg { width: 13px; height: 13px; }
.todo { height: 31px; margin: 0 7px 0 8px; border-top: 1px solid #33383b; display: flex; align-items: center; color: #7c8486; padding: 1px 0 0; }
.todo > svg { width: 12px; height: 12px; }
.big-tools svg { width: 13px; height: 13px; }
.search { height: 20px; margin-left: 4px; width: 185px; padding-left: 5px; display: flex; align-items: center; gap: 3px; background: #16191b; color: #8b9395; font-size: 9px; }
.search svg { width: 10px; height: 10px; }

/* chat window */
.chat { position: absolute; left: 1660px; top: 229px; width: 260px; height: 301px; background: var(--white); color: var(--grey); font: 10.500px/16px var(--ui); border-top: 1px solid var(--grey); white-space: nowrap; overflow: hidden; }
.chat header { height: 22px; padding-left: 118px; display: flex; align-items: center; color: var(--ink); font-size: 9.300px; }
.chat header b { margin-left: 6px; font-weight: 500; }
.ctl { margin-left: auto; display: flex; gap: 14px; margin-right: -4px; }
.chat ol { padding: 3px 0 0 7px; height: 189px; }
.chat li { height: 19.100px; line-height: 19.100px; }
.chat .k { color: var(--ink); }
.to { display: flex; align-items: center; height: 34px; padding-left: 8px; font-size: 9.600px; }
.to span:first-child { color: var(--ink); width: 44px; }
.to .all { width: 28px; }
.to em { margin-left: 2px; border: 3px solid transparent; border-top: 4px solid var(--grey); border-bottom: 0; }
.to small { width: 3px; height: 2px; background: var(--grey); margin-left: 3px; }
.g1 { margin-left: 6px; }
.g2 { margin: 0 4px 0 7px; }
.chat footer { padding: 39px 0 0 213px; font-size: 9.600px; }

/* taskbar */
.taskbar {
  position: absolute; left: 0; bottom: 0; width: 1920px; height: 54px; display: flex; align-items: center;
  background: conic-gradient(at 1px 1px, transparent 270deg, #0c0e0f 0) 0 0 / 5px 5px var(--ink);
}
.pins { display: flex; margin-left: 664px; height: 54px; }
.pins i { width: 49.650px; display: flex; flex-direction: column; align-items: center; padding-top: 14px; }
.pins svg { width: 27px; height: 27px; }
.pins .sm { width: 25px; }
.pins .r::after { content: ""; width: 7px; height: 4px; margin-top: 4px; border-radius: 2px; background: #7c8486; }
.pins .last { padding-top: 15px; width: 46px; }
.pins .last svg { width: 24px; height: 18px; }
.tray { margin-left: auto; display: flex; align-items: center; gap: 9px; padding-right: 21px; height: 54px; }
.tray svg { width: 18px; height: 18px; }
.tray .mic { margin-left: 4px; }
.ime { width: 18px; margin: -1px 1px 0 9px; font: 14px/18px var(--cjk); text-align: center; }
.tray .net { margin-left: 6px; width: 19px; height: 20px; }
.tray .vol { width: 20px; height: 20px; }
.clock { width: 75px; text-align: right; font-size: 13px; line-height: 18px; }
```
